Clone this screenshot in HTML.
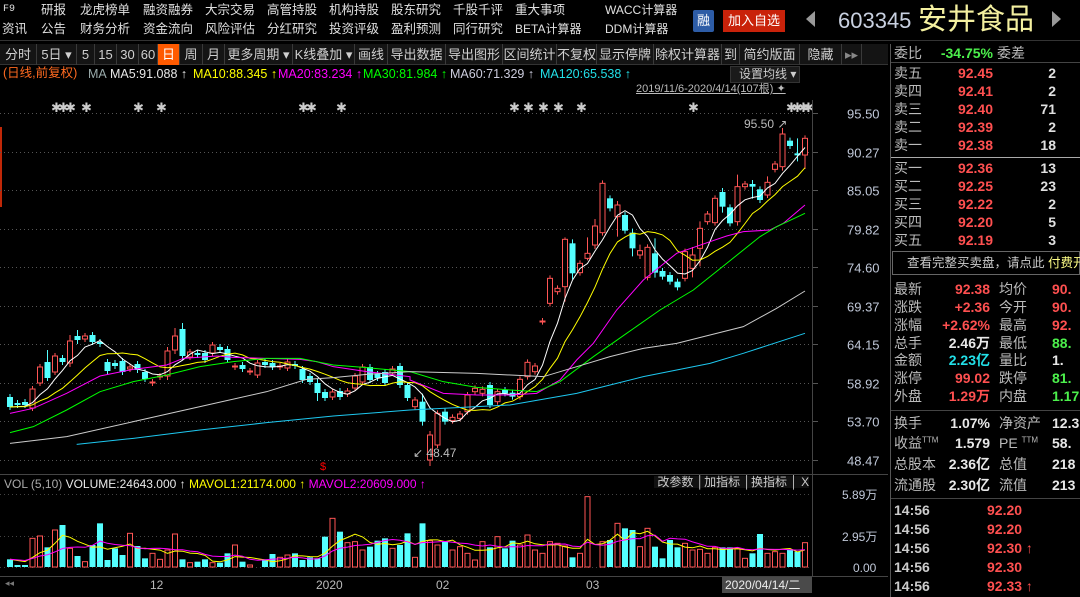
<!DOCTYPE html>
<html><head><meta charset="utf-8"><style>
*{margin:0;padding:0;box-sizing:border-box}
body{width:1080px;height:597px;background:#000;overflow:hidden;position:relative;font-family:"Liberation Sans","Noto Sans CJK SC",sans-serif;color:#c8c8c8}
.a{position:absolute;white-space:nowrap;line-height:1}
.m{font-size:12.5px;color:#e0e0e0}
.tb{position:absolute;top:44px;left:0;width:888px;height:21px;background:#141414;border-bottom:1px solid #333}
.tb span{position:absolute;top:0;height:21px;line-height:21px;font-size:13px;color:#d0d0d0;border-right:1px solid #3a3a3a;text-align:center}
.rp{position:absolute;left:890px;top:44px;width:190px;height:553px;border-left:1px solid #555}
.w{color:#e8e8e8}.c{color:#22e0e8}
</style></head><body>
<div class="a m" style="left:3px;top:5px;font-size:10px;font-family:'Liberation Mono',monospace">F9</div>
<div class="a m" style="left:41px;top:4px">研报</div><div class="a m" style="left:80px;top:4px">龙虎榜单</div><div class="a m" style="left:143px;top:4px">融资融券</div><div class="a m" style="left:205px;top:4px">大宗交易</div><div class="a m" style="left:267px;top:4px">高管持股</div><div class="a m" style="left:329px;top:4px">机构持股</div><div class="a m" style="left:391px;top:4px">股东研究</div><div class="a m" style="left:453px;top:4px">千股千评</div><div class="a m" style="left:515px;top:4px">重大事项</div><div class="a m" style="left:605px;top:4px;font-size:12px">WACC计算器</div>
<div class="a m" style="left:2px;top:23px">资讯</div><div class="a m" style="left:41px;top:23px">公告</div><div class="a m" style="left:80px;top:23px">财务分析</div><div class="a m" style="left:143px;top:23px">资金流向</div><div class="a m" style="left:205px;top:23px">风险评估</div><div class="a m" style="left:267px;top:23px">分红研究</div><div class="a m" style="left:329px;top:23px">投资评级</div><div class="a m" style="left:391px;top:23px">盈利预测</div><div class="a m" style="left:453px;top:23px">同行研究</div><div class="a m" style="left:515px;top:23px;font-size:12px">BETA计算器</div><div class="a m" style="left:605px;top:23px;font-size:12px">DDM计算器</div>
<div class="a" style="left:693px;top:10px;width:21px;height:22px;background:#2d5ca6;border-radius:2px;color:#fff;font-size:13px;text-align:center;line-height:22px">融</div>
<div class="a" style="left:723px;top:10px;width:62px;height:22px;background:#c9220a;color:#fff;font-size:13px;text-align:center;line-height:22px">加入自选</div>
<div class="a" style="left:806px;top:11px;width:0;height:0;border-top:8px solid transparent;border-bottom:8px solid transparent;border-right:9px solid #999"></div>
<div class="a" style="left:838px;top:10px;font-size:22px;color:#c8d0e0">603345</div>
<div class="a" style="left:918px;top:6px;font-size:29px;color:#f4f0a0">安井食品</div>
<div class="a" style="left:1052px;top:11px;width:0;height:0;border-top:8px solid transparent;border-bottom:8px solid transparent;border-left:9px solid #999"></div>
<div class="a" style="left:0;top:40px;width:1080px;height:1px;background:#333"></div>
<div class="tb">
<span style="left:0;width:37px">分时</span><span style="left:37px;width:40px">5日 ▾</span><span style="left:77px;width:18px">5</span><span style="left:95px;width:22px">15</span><span style="left:117px;width:22px">30</span><span style="left:139px;width:19px">60</span><span style="left:158px;width:22px;background:#ff5a00;color:#fff">日</span><span style="left:180px;width:23px">周</span><span style="left:203px;width:22px">月</span><span style="left:225px;width:68px">更多周期 ▾</span><span style="left:293px;width:62px">K线叠加 ▾</span><span style="left:355px;width:33px">画线</span><span style="left:388px;width:58px">导出数据</span><span style="left:446px;width:57px">导出图形</span><span style="left:503px;width:54px">区间统计</span><span style="left:557px;width:40px">不复权</span><span style="left:597px;width:57px">显示停牌</span><span style="left:654px;width:68px">除权计算器</span><span style="left:722px;width:18px">到</span><span style="left:740px;width:60px">简约版面</span><span style="left:800px;width:42px">隐藏</span><span style="left:842px;width:20px;color:#888">▸▸</span>
</div>
<div class="a" style="left:3px;top:67px;font-size:12.5px;color:#ff6a20">(日线,前复权)</div>
<div class="a" style="left:88px;top:68px;font-size:12.5px;color:#9aa">MA</div>
<div class="a w" style="left:110px;top:68px;font-size:12.5px">MA5:91.088 ↑</div>
<div class="a" style="left:193px;top:68px;font-size:12.5px;color:#ff0">MA10:88.345 ↑</div>
<div class="a" style="left:278px;top:68px;font-size:12.5px;color:#f0f">MA20:83.234 ↑</div>
<div class="a" style="left:363px;top:68px;font-size:12.5px;color:#0f0">MA30:81.984 ↑</div>
<div class="a" style="left:450px;top:68px;font-size:12.5px;color:#ccd">MA60:71.329 ↑</div>
<div class="a c" style="left:540px;top:68px;font-size:12.5px">MA120:65.538 ↑</div>
<div class="a" style="left:730px;top:66px;width:70px;height:17px;background:#1a1a1a;border:1px solid #333;font-size:12px;line-height:15px;padding-left:8px;color:#ccc">设置均线 ▾</div>
<div class="a" style="left:636px;top:84px;font-size:11px;color:#bbb;text-decoration:underline">2019/11/6-2020/4/14(107根) ✦</div>
<div class="a" style="left:0;top:127px;width:2px;height:80px;background:#c02808"></div>
<svg class="a" style="left:0;top:0" width="890" height="597" id="sv"></svg>
<div class="a" style="left:812px;top:100px;width:1px;height:476px;background:#444"></div>
<div class="a" style="left:0;top:474px;width:888px;height:1px;background:#444"></div>
<div class="a" style="left:4px;top:478px;font-size:12px;color:#aaa">VOL (5,10) <span class="w">VOLUME:24643.000 ↑</span> <span style="color:#ff0">MAVOL1:21174.000 ↑</span> <span style="color:#f0f">MAVOL2:20609.000 ↑</span></div>
<div class="a" style="left:654px;top:476px;font-size:12px;color:#ccc;background:#111">&nbsp;改参数 │加指标 │换指标 │ X</div>
<div class="a" style="left:0;top:576px;width:888px;height:1px;background:#444"></div>
<div class="a" style="left:150px;top:579px;font-size:12px;color:#bbb">12</div>
<div class="a" style="left:316px;top:579px;font-size:12px;color:#bbb">2020</div>
<div class="a" style="left:436px;top:579px;font-size:12px;color:#bbb">02</div>
<div class="a" style="left:586px;top:579px;font-size:12px;color:#bbb">03</div>
<div class="a" style="left:722px;top:577px;width:90px;height:16px;background:#4a4a4a;font-size:12px;line-height:16px;color:#eee;padding-left:3px">2020/04/14/二</div>
<div class="a" style="left:5px;top:579px;font-size:9px;color:#777">◂◂</div>
<div class="rp"></div>
<div class="a" style="left:891px;top:62px;width:189px;height:1px;background:#444"></div>
<div class="a" style="left:891px;top:157px;width:189px;height:1px;background:#aaa"></div>
<div class="a" style="left:892px;top:251px;width:188px;height:24px;border:1px solid #666;font-size:12.5px;line-height:22px;padding-left:14px;color:#ccc">查看完整买卖盘，请点此 <span style="color:#ff8">付费开通</span></div>
<div class="a" style="left:891px;top:410px;width:189px;height:1px;background:#444"></div>
<div class="a" style="left:891px;top:498px;width:189px;height:1px;background:#444"></div>
<div id="rp"></div>
<script>
var sv=document.getElementById('sv'),h='';
function Y(p){return 113+(95.5-p)*7.378}
var L=[95.5,90.27,85.05,79.82,74.6,69.37,64.15,58.92,53.7,48.47];
L.forEach(function(p){var y=Math.round(Y(p))+.5;h+='<line x1="0" x2="812" y1="'+y+'" y2="'+y+'" stroke="#555" stroke-dasharray="1,3"/><line x1="812" x2="818" y1="'+y+'" y2="'+y+'" stroke="#555"/><text x="847" y="'+(y+5)+'" fill="#c0c8d8" font-size="13" font-family="Liberation Sans">'+p.toFixed(2)+'</text>';});
[[494,'5.89万'],[536,'2.95万'],[567,'0.00']].forEach(function(a){h+='<line x1="0" x2="812" y1="'+(a[0]+.5)+'" y2="'+(a[0]+.5)+'" stroke="#444" stroke-dasharray="1,3"/><text x="'+(a[1]=='0.00'?853:842)+'" y="'+(a[0]+5)+'" fill="#c0c8d8" font-size="12" font-family="Liberation Sans,Noto Sans CJK SC">'+a[1]+'</text>';});
var A=[[397,407],[403,405],[402,405],[408,389],[383,367],[362,378],[372,356],[358,362],[363,341],[336,340],[339,336],[335,342],[342,344],[362,371],[363,366],[361,372],[369,367],[364,370],[372,379],[383,382],[377,376],[376,351],[350,336],[329,356],[357,352],[353,355],[353,360],[353,345],[347,350],[349,360],[367,366],[365,369],[372,371],[375,363],[362,365],[363,367],[367,366],[368,362],[364,366],[369,380],[376,382],[383,393],[392,398],[397,392],[391,397],[394,391],[388,376],[382,367],[367,380],[374,378],[372,383],[373,369],[366,385],[385,398]];
var B=[[920,900],[905,965],[1080,1005],[1035,940],[935,965],[962,952],[955,942],[935,885],[875,865],[880,868],[855,915],[905,875],[870,880],[878,890],[890,838],[830,787],[815,798],[665,663],[610,535],[575,565],[560,418],[430,520],[518,490],[475,460],[435,378],[398,250],[295,325],[350,315],[345,392],[398,445],[465,452],[532,442],[460,518],[513,530],[525,545],[545,562],[535,455],[505,465],[445,385],[365,342],[368,295],[276,320],[322,370],[365,260],[260,252],[252,260],[268,300],[285,247],[208,192],[200,102],[122,138],[160,166],[165,115]];
B.forEach(function(b){A.push([100+b[0]/3,100+b[1]/3])});
var HL={55:[8,4],56:[4,6],63:[3,3],74:[2,15],75:[4,6],77:[16,2],78:[7,4],81:[4,20],83:[4,8],84:[6,4],86:[15,5],91:[8,9],92:[7,18],95:[4,6],97:[12,4],99:[4,12],101:[6,3],103:[6,4],105:[15,6],106:[3,14],5:[12,3],8:[6,4],9:[6,4],21:[4,4],22:[8,4],23:[6,4],41:[4,8]};
var cl=[],vc=[];
A.forEach(function(c,i){var x=10+i*7.5,o=c[0],cc=c[1],t=Math.min(o,cc),b=Math.max(o,cc),hl=HL[i]||[3,3],up=cc<=o;cl.push(cc);vc.push(up);
var col=up?'#ff5555':'#54ffff';
h+='<line x1="'+x+'" x2="'+x+'" y1="'+(t-hl[0])+'" y2="'+(b+hl[1])+'" stroke="'+col+'"/>';
if(up)h+='<rect x="'+(x-2.5)+'" y="'+t+'" width="5" height="'+Math.max(b-t,1)+'" fill="#000" stroke="'+col+'"/>';
else h+='<rect x="'+(x-3)+'" y="'+t+'" width="6" height="'+Math.max(b-t,1)+'" fill="'+col+'"/>';});
function ma(n){var p=[];for(var i=0;i<cl.length;i++){var s=0;for(var k=0;k<n;k++)s+=cl[Math.max(0,i-k)];p.push((10+i*7.5).toFixed(1)+','+(s/n).toFixed(1));}return p.join(' ');}
h+='<polyline points="'+ma(5)+'" fill="none" stroke="#fff"/><polyline points="'+ma(10)+'" fill="none" stroke="#ff0"/>';
function pl(a,b,c){var p=[];a.forEach(function(q){p.push((q[0]/3)+','+(100+q[1]/3))});b.forEach(function(q){p.push((410+q[0]/3)+','+(100+q[1]/3))});h+='<polyline points="'+p.join(' ')+'" fill="none" stroke="'+c+'"/>';}
pl([[30,940],[100,925],[200,880],[300,828],[400,808],[500,795],[550,775],[650,768],[700,772],[900,778],[950,785],[1000,800],[1100,815],[1230,830]],[[0,840],[100,880],[200,885],[300,885],[380,880],[450,840],[500,780],[550,730],[620,630],[700,540],[800,460],[900,425],[950,408],[1000,395],[1080,390],[1120,370],[1185,315]],'#f0f');
pl([[30,998],[100,980],[200,930],[300,875],[400,845],[500,825],[600,800],[700,785],[800,775],[900,775],[1000,795],[1100,803],[1230,815]],[[0,815],[100,845],[200,862],[300,870],[380,875],[450,845],[550,770],[650,700],[750,630],[850,570],[950,490],[1050,410],[1100,380],[1185,340]],'#0f0');
pl([[30,1030],[200,1010],[400,965],[600,920],[800,875],[920,838],[1000,833],[1100,823],[1230,815]],[[0,815],[200,820],[400,830],[500,800],[600,770],[700,745],[800,730],[900,705],[1000,680],[1100,625],[1185,573]],'#ccc');
pl([[230,1033],[400,1015],[600,990],[800,968],[1000,948],[1230,930]],[[0,930],[300,915],[500,880],[700,830],[900,790],[1000,760],[1185,700]],'#1ec8f0');
h+='<text x="413" y="457" fill="#bbb" font-size="12" font-family="Liberation Sans">↙ 48.47</text><text x="744" y="128" fill="#bbb" font-size="12" font-family="Liberation Sans">95.50 ↗</text>';
h+='<text x="320" y="470" fill="#f00" font-size="11" font-family="Liberation Sans">$</text>';
[55,62,69,85,137,160,302,310,340,513,527,542,557,580,692,790,796,802,807].forEach(function(x){h+='<text x="'+(x-4)+'" y="112" fill="#ccc" font-size="13" font-weight="bold" font-family="DejaVu Sans">✱</text>'});
var V=[268,285,285,205,198,232,180,165,235,258,275,225,160,270,235,255,190,228,265,250,268,240,192,268,278,275,268,278,278,250,225,275,285,295,268,252,262,255,250,270,262,265,200,145,185,218,215,240,230,212,205,235,225,190,262,160,212,225,215,240,230,250,270,215,232,200,235,212,225,195,240,250,215,220,228,262,250,80,298,215,210,160,175,180,230,175,230,265,210,232,220,240,238,250,232,232,232,235,265,250,192,250,245,250,240,245,218];
var vm1=[],vm2=[];
for(var i=0;i<107;i++){var zy=V[i%V.length],y=470+zy/3,x=10+i*7.5,col=vc[i]?'#ff5555':'#54ffff';
if(vc[i])h+='<rect x="'+(x-2.5)+'" y="'+y+'" width="5" height="'+(567-y)+'" fill="#000" stroke="'+col+'"/>';else h+='<rect x="'+(x-3)+'" y="'+y+'" width="6" height="'+(567-y)+'" fill="'+col+'"/>';
var s=0;for(var k=0;k<5;k++)s+=470+V[Math.max(0,i-k)]/3;vm1.push(x+','+(s/5).toFixed(1));s=0;for(k=0;k<10;k++)s+=470+V[Math.max(0,i-k)]/3;vm2.push(x+','+(s/10).toFixed(1));}
h+='<polyline points="'+vm1.join(' ')+'" fill="none" stroke="#ff0"/><polyline points="'+vm2.join(' ')+'" fill="none" stroke="#f0f"/>';
sv.innerHTML=h;
var R='';function t(x,y,s,c,al,b){R+='<div class="a" style="'+(al?'right:'+(1080-x)+'px':'left:'+x+'px')+';top:'+(y-8)+'px;font-size:'+(b?14:14)+'px;'+(b?'font-weight:bold;':'')+'color:'+c+'">'+s+'</div>';}
t(894,54,'委比','#bbb');t(993,54,'-34.75%','#4cf04c',1,1);t(997,54,'委差','#bbb');
var ob=[['卖五','92.45','2',74],['卖四','92.41','2',92],['卖三','92.40','71',110],['卖二','92.39','2',128],['卖一','92.38','18',146],['买一','92.36','13',169],['买二','92.25','23',187],['买三','92.22','2',205],['买四','92.20','5',223],['买五','92.19','3',241]];
ob.forEach(function(o){t(894,o[3],o[0],'#bbb');t(993,o[3],o[1],'#ff5050',1,1);t(1056,o[3],o[2],'#e0e0e0',1,1);});
var q=[['最新','92.38','#ff5050','均价','90.','#ff5050',290],['涨跌','+2.36','#ff5050','今开','90.','#ff5050',308],['涨幅','+2.62%','#ff5050','最高','92.','#ff5050',326],['总手','2.46万','#e8e8e8','最低','88.','#4cf04c',344],['金额','2.23亿','#22e0e8','量比','1.','#e8e8e8',361],['涨停','99.02','#ff5050','跌停','81.','#4cf04c',379],['外盘','1.29万','#ff5050','内盘','1.17','#4cf04c',397],['换手','1.07%','#e8e8e8','净资产','12.3','#e8e8e8',424],['收益<sup style="font-size:8px">TTM</sup>','1.579','#e8e8e8','PE <sup style="font-size:8px">TTM</sup>','58.','#e8e8e8',444],['总股本','2.36亿','#e8e8e8','总值','218','#e8e8e8',465],['流通股','2.30亿','#e8e8e8','流值','213','#e8e8e8',486]];
q.forEach(function(o){t(894,o[6],o[0],'#bbb');t(990,o[6],o[1],o[2],1,1);t(999,o[6],o[3],'#bbb');t(1052,o[6],o[4],o[5],0,1);});
[[511,'92.20',''],[530,'92.20',''],[549,'92.30','↑'],[568,'92.30',''],[587,'92.33','↑']].forEach(function(o){t(894,o[0],'14:56','#ccc',0,1);t(987,o[0],o[1]+' '+o[2],'#ff5050',0,1);});
document.getElementById('rp').innerHTML=R;
</script>
</body></html>
